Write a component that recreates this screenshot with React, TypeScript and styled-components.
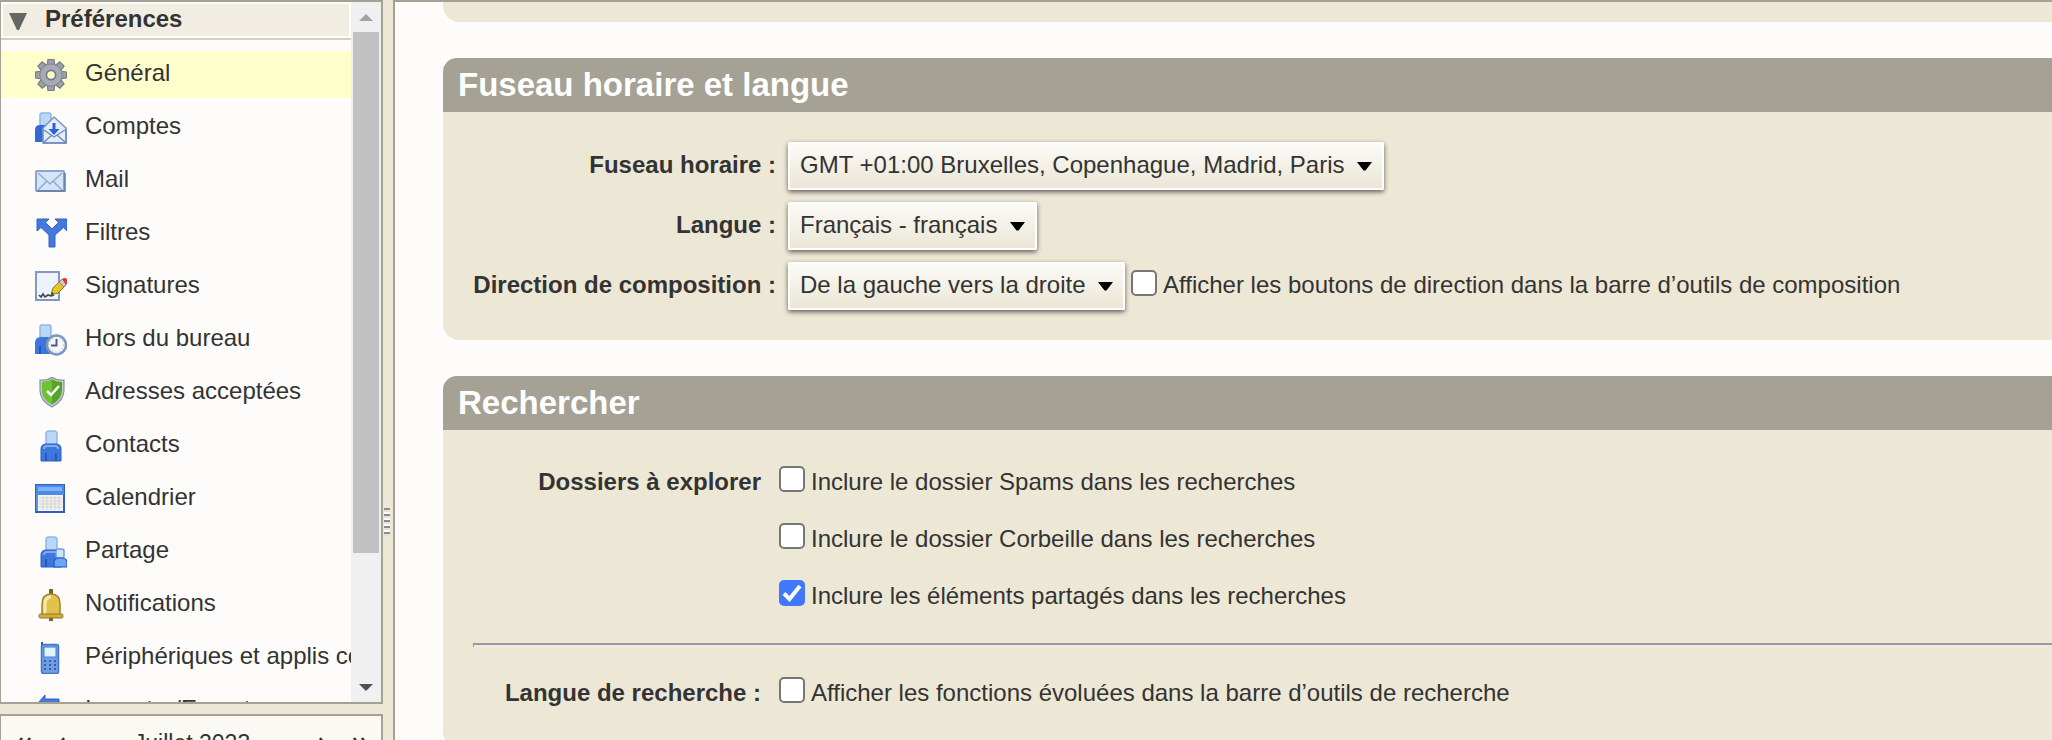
import React, { useId, useState } from "react";
import styled, { createGlobalStyle } from "styled-components";

const GlobalStyle = createGlobalStyle`
  *, *::before, *::after { box-sizing: border-box; }
  body {
    margin: 0;
    background: #ece7d6;
    color: #333;
    font-family: "Liberation Sans", Arial, sans-serif;
    font-size: 24px;
    line-height: 24px;
  }
`;

const LINE = "#a5a194";

const Page = styled.div`
  display: grid;
  grid-template-columns: 383px 10px minmax(0, 1fr);
  height: 100vh;
  overflow: hidden;
`;

const Sidebar = styled.aside`
  display: flex;
  flex-direction: column;
  gap: 10px;
  min-height: 0;
`;

const Panel = styled.section<{ $tint: string }>`
  background: ${(p) => p.$tint};
  border: 2px solid ${LINE};
  border-left-width: 1px;
  overflow: hidden;
`;

const TreePanel = styled(Panel)`
  flex: 1;
  min-height: 0;
  display: grid;
  grid-template-columns: minmax(0, 1fr) 30px;
`;

const Tree = styled.nav`
  overflow: hidden;
`;

const TreeTitle = styled.button`
  display: flex;
  gap: 18px;
  width: 100%;
  height: 36px;
  margin-bottom: 2px;
  padding: 0 0 0 6px;
  border: 2px solid #fff;
  background: #f2ede3;
  box-shadow: 0 2px #d5cfbc;
  color: inherit;
  font: inherit;
  font-weight: bold;
  line-height: 30px;
  text-align: left;

  svg { margin-top: 9px; }
`;

const TreeList = styled.ul`
  display: flex;
  flex-direction: column;
  gap: 6px;
  margin: 0;
  padding: 11px 0 0;
  list-style: none;
`;

const TreeLink = styled.a<{ $active: boolean }>`
  display: flex;
  gap: 18px;
  height: 47px;
  padding: 8px 0 0 34px;
  background: ${(p) => (p.$active ? "#ffffcc" : "transparent")};
  color: inherit;
  line-height: 28px;
  text-decoration: none;
  white-space: nowrap;

  svg { flex: none; }
`;

const ScrollBar = styled.div`
  display: flex;
  flex-direction: column;
  background: #f0f0f0;
`;

const ScrollArrow = styled.button`
  display: grid;
  place-items: center;
  height: 30px;
  padding: 0;
  border: 0;
  background: none;
`;

const ScrollThumb = styled.div`
  flex: 521;
  margin: 0 2px;
  background: #c1c1c1;
`;

const ScrollRest = styled.div`
  flex: 119;
`;

const MiniCalendar = styled(Panel)`
  flex: 0 0 26px;
  border-bottom: 0;
`;

const MonthBar = styled.div`
  display: flex;
  align-items: center;
  height: 54px;
  padding: 0 14px 0 16px;
  font-size: 23px;
`;

const MonthName = styled.span`
  flex: 1;
  text-align: center;
`;

const MonthButton = styled.button<{ $end?: boolean }>`
  display: flex;
  justify-content: ${(p) => (p.$end ? "flex-end" : "flex-start")};
  width: 42px;
  padding: 0;
  border: 0;
  background: none;
`;

const Splitter = styled.div`
  display: grid;
  align-content: start;
  padding: 508px 0 0 1px;
`;

const Grip = styled.span`
  width: 6px;
  height: 28px;
  background: repeating-linear-gradient(#8f8c84 0 2px, #e4e2da 2px 4px, #fff 4px 6px);
`;

const Main = styled.main`
  min-width: 0;
  padding-left: 48px;
  border: solid ${LINE};
  border-width: 2px 0 0 2px;
  background: #fdfcfa;
  overflow: hidden;
`;

const Card = styled.section`
  margin-bottom: 36px;
  border-radius: 14px 0 0 16px;
  background: #ede7d6;
  overflow: hidden;
`;

const CardEnd = styled.div`
  height: 20px;
  margin-bottom: 36px;
  border-radius: 0 0 0 16px;
  background: #ede7d6;
`;

const CardTitle = styled.h2`
  margin: 0;
  padding-left: 15px;
  background: ${LINE};
  color: #fff;
  font-size: 33px;
  line-height: 54px;
`;

const ChoiceForm = styled.div`
  display: grid;
  grid-template-columns: 303px minmax(0, 1fr);
  gap: 12px;
  padding: 30px 0 30px 30px;
  align-items: center;
`;

const Caption = styled.label`
  padding-bottom: 2px;
  font-weight: bold;
  text-align: right;
  white-space: nowrap;
`;

const GroupCaption = styled.span`
  font-weight: bold;
  text-align: right;
  white-space: nowrap;
`;

const Controls = styled.div`
  display: flex;
  align-items: center;
  gap: 6px;

  > label { padding-bottom: 2px; }
`;

const SelectBox = styled.span`
  display: inline-grid;
  align-items: center;
`;

const Select = styled.select`
  grid-area: 1 / 1;
  appearance: none;
  min-width: 249px;
  height: 48px;
  padding: 0 37px 2px 10px;
  border: 2px solid #fff;
  border-radius: 2px;
  background: linear-gradient(#fbfaf6, #ebe6d6);
  box-shadow: 0 2px 5px rgba(0, 0, 0, 0.6);
  color: inherit;
  font: inherit;
  line-height: 32px;
`;

const SelectArrow = styled.svg`
  grid-area: 1 / 1;
  justify-self: end;
  margin-right: 12px;
  pointer-events: none;
`;

const FolderForm = styled.div`
  padding: 23px 0 27px 30px;
`;

const FolderRow = styled.div`
  display: grid;
  grid-template-columns: 288px minmax(0, 1fr);
  column-gap: 18px;
  align-items: center;
  height: 57px;
`;

const Rule = styled.hr`
  height: 4px;
  margin: 19px 0 17px;
  border: solid #9a9a9a;
  border-width: 2px 0 0 1px;
  background: #ebebeb;
`;

const CheckLabel = styled.label`
  display: flex;
  align-items: center;
  gap: 6px;
  white-space: nowrap;
`;

const CheckCell = styled.span`
  display: grid;
  margin-bottom: 5px;
`;

const CheckBox = styled.input`
  grid-area: 1 / 1;
  appearance: none;
  width: 26px;
  height: 26px;
  margin: 0;
  border: 2px solid #767676;
  border-radius: 5px;
  background: #fff;

  &:checked {
    border-color: #3f78ff;
    background: #3f78ff;
  }
`;

const CheckMark = styled.svg`
  grid-area: 1 / 1;
  pointer-events: none;
`;

function Person() {
  return (
    <>
      <rect x="11" y="1" width="11" height="14" rx="3" fill="#b9d8f7" stroke="#8fb5e8" strokeWidth="1.5" />
      <path d="M6 31V19q0-5 5-5h10q5 0 5 5v12z" fill="#3d76dc" stroke="#2c5fc6" strokeWidth="1" />
      <path d="M9 19q0-3 3-3h8q3 0 3 3" fill="none" stroke="#7facf3" strokeWidth="2" />
      <path d="M11 23v8M21 23v8" stroke="#214fb4" strokeWidth="1.5" />
    </>
  );
}

const teeth = [0, 45, 90, 135, 180, 225, 270, 315];

const icons: Record<string, React.ReactNode> = {
  gear: (
    <>
      {teeth.map((a) => (
        <path key={a} d="M12 8l1-7.500h6l1 7.500z" transform={`rotate(${a} 16 16)`} fill="#9da1aa" stroke="#767b86" strokeWidth="1.2" />
      ))}
      <circle cx="16" cy="16" r="8" fill="none" stroke="#858a95" strokeWidth="7.500" />
      <circle cx="16" cy="16" r="8" fill="none" stroke="#a7abb4" strokeWidth="5" />
      <circle cx="16" cy="16" r="4.500" fill="#ffffcc" stroke="#747984" strokeWidth="1.5" />
    </>
  ),
  accounts: (
    <>
      <rect x="5" y="1" width="11" height="13" rx="2" fill="#b9d8f7" stroke="#8fb5e8" strokeWidth="1.5" />
      <path d="M0 30V18q0-5 5-5h8v17z" fill="#3469d3" />
      <path d="M8 16L19 5l12 11v15H8z" fill="#e3ecf8" stroke="#7c97c2" strokeWidth="1.6" />
      <path d="M9 18l10 7 11-7M9 30l8-7M30 30l-8-7M8 31h23V17" fill="none" stroke="#6f8bb8" strokeWidth="1.4" />
      <path d="M17.500 11h3v6h4l-5.500 6-5.500-6h4z" fill="#2f62cf" />
    </>
  ),
  mail: (
    <>
      <rect x="1" y="6" width="28" height="20" rx="1" fill="#d6e4f7" stroke="#8aa4cb" strokeWidth="2" />
      <path d="M3 8l12 11L27 8M3 25l9-9M27 25l-9-9" fill="none" stroke="#93acd2" strokeWidth="1.6" />
      <path d="M2 26h28V8" fill="none" stroke="#617ba3" strokeWidth="1.5" />
    </>
  ),
  filters: (
    <path
      d="M2 1h12l-3.500 3.500L17 11l6.500-6.500L20 1h12v12l-3.500-3.500L20 17v12h-6V17L6 9.500 2 13z"
      fill="#4478dd"
      stroke="#3162c8"
      strokeWidth="1"
    />
  ),
  signatures: (
    <>
      <rect x="1" y="1" width="23" height="28" fill="#edf3fb" stroke="#8299bd" strokeWidth="2" />
      <path d="M4 24l2 2 2-3 2 3 3-2 3 1 3-1" fill="none" stroke="#444" strokeWidth="1.6" />
      <path d="M16 24l2-7 8-8 5 5-8 8z" fill="#e7c62c" stroke="#8c7a23" strokeWidth="1" />
      <path d="M24 11l3-3 5 4-3 4z" fill="#ccc" stroke="#777" strokeWidth=".8" />
      <path d="M27 8q3-2 5 0v4l-1 2z" fill="#e2373a" />
      <path d="M16 24l1-3 2 2z" fill="#333" />
    </>
  ),
  away: (
    <>
      <rect x="5" y="1" width="11" height="14" rx="2" fill="#b9d8f7" stroke="#8fb5e8" strokeWidth="1.5" />
      <path d="M0 30V19q0-6 6-6h10q5 0 5 5v12z" fill="#3d76dc" />
      <path d="M5 22v8" stroke="#214fb4" strokeWidth="1.5" />
      <circle cx="21.500" cy="21" r="9.500" fill="#f4f7fb" stroke="#7f96b8" strokeWidth="2.500" />
      <circle cx="21.500" cy="21" r="7" fill="none" stroke="#c0cbdc" strokeWidth="1.500" strokeDasharray="1 2.600" />
      <path d="M21.500 15v6.500H16" fill="none" stroke="#4d5f7e" strokeWidth="2" />
    </>
  ),
  shield: (
    <>
      <path d="M17 0q5 4 12 3v10q0 11-12 17Q5 24 5 13V3q7 1 12-3z" fill="#c1cad5" stroke="#8695a7" strokeWidth="1.2" />
      <path d="M17 2q4 3 10 3v8q0 9-10 14.500Q7 22 7 13V5q6 0 10-3z" fill="#55a524" />
      <path d="M17 2v25.500Q7 22 7 13V5q6 0 10-3z" fill="#6fc233" />
      <path d="M12 14l4 4 8-9" fill="none" stroke="#fff" strokeWidth="2.500" />
    </>
  ),
  contact: <Person />,
  calendar: (
    <>
      <rect x="1" y="2" width="28" height="27" fill="#f3f3f3" stroke="#2e60bd" strokeWidth="2" />
      <path d="M1 2h28v10H1z" fill="#4d8ae8" />
      <path d="M3 4h24v4H3z" fill="#7fb2f7" />
      <path d="M2 12v16" stroke="#5c92e6" strokeWidth="2" />
      <path d="M4 15h23M4 18h23M4 21h23M4 24h23M8 13v14M12 13v14M16 13v14M20 13v14M24 13v14" stroke="#d4d4d4" strokeWidth="1" />
    </>
  ),
  share: (
    <>
      <Person />
      <rect x="21" y="13" width="8" height="9" rx="2" fill="#cfe3fb" stroke="#6f9ce6" strokeWidth="1.5" />
      <path d="M19 31v-4q0-5 5-5h3q5 0 5 5v4z" fill="#6fa3f3" stroke="#2455c0" strokeWidth="1.2" />
    </>
  ),
  bell: (
    <>
      <path d="M16 0v5M16 29v3" stroke="#7c6028" strokeWidth="4" />
      <path d="M7 26V15q0-10 9-10t9 10v11z" fill="#e2c24a" stroke="#a2822f" strokeWidth="1.500" />
      <path d="M10 25V15q0-7 6-7" fill="none" stroke="#f7e9a6" strokeWidth="3" />
      <path d="M5 25h22q1 0 1 2t-1 2H5q-1 0-1-2t1-2z" fill="#d3ae37" stroke="#94752a" strokeWidth="1" />
    </>
  ),
  phone: (
    <>
      <path d="M7 0v6" stroke="#555" strokeWidth="2" />
      <rect x="6.500" y="2.500" width="17" height="29" rx="2" fill="#6e9ee6" stroke="#4574c4" strokeWidth="1.5" />
      <rect x="9" y="5" width="12" height="10" fill="#dff3fb" stroke="#4b7ccd" strokeWidth="1" />
      <path d="M9 19h12M9 23h12M9 27h12" stroke="#365fa6" strokeWidth="2" strokeDasharray="2 3" />
    </>
  ),
  transfer: (
    <>
      <path d="M3 8l7-8v4h14v8H10v4z" fill="#4478dd" stroke="#3162c8" strokeWidth="1" />
      <path d="M29 23l-7-8v5H8v7h14v4z" fill="#6fa3f3" stroke="#3162c8" strokeWidth="1" />
    </>
  ),
};

const entries: [string, string][] = [
  ["gear", "Général"],
  ["accounts", "Comptes"],
  ["mail", "Mail"],
  ["filters", "Filtres"],
  ["signatures", "Signatures"],
  ["away", "Hors du bureau"],
  ["shield", "Adresses acceptées"],
  ["contact", "Contacts"],
  ["calendar", "Calendrier"],
  ["share", "Partage"],
  ["bell", "Notifications"],
  ["phone", "Périphériques et applis connectés"],
  ["transfer", "Importer/Exporter"],
];

function Chevrons({ double = false, right = false }: { double?: boolean; right?: boolean }) {
  return (
    <svg width={double ? 14 : 6} height="12" viewBox={`0 0 ${double ? 14 : 6} 12`} aria-hidden="true">
      <g transform={right ? `rotate(180 ${double ? 7 : 3} 6)` : undefined} fill="none" stroke="#333" strokeWidth="2.500">
        <path d="M5 1L1.500 6 5 11" />
        {double && <path d="M13 1L9.500 6l3.500 5" />}
      </g>
    </svg>
  );
}

function ChoiceRow({ caption, value, children }: { caption: string; value: string; children?: React.ReactNode }) {
  const id = useId();
  return (
    <>
      <Caption htmlFor={id}>{caption}</Caption>
      <Controls>
        <SelectBox>
          <Select id={id} defaultValue={value}>
            <option>{value}</option>
          </Select>
          <SelectArrow width="15" height="9" viewBox="0 0 15 9" aria-hidden="true">
            <path d="M0 0h15L8.500 8.500h-2z" fill="#000" />
          </SelectArrow>
        </SelectBox>
        {children}
      </Controls>
    </>
  );
}

function Check({ label, initial = false }: { label: string; initial?: boolean }) {
  const [on, setOn] = useState(initial);
  return (
    <CheckLabel>
      <CheckCell>
        <CheckBox type="checkbox" checked={on} onChange={(e) => setOn(e.target.checked)} />
        {on && (
          <CheckMark width="26" height="26" viewBox="0 0 26 26" aria-hidden="true">
            <path d="M5 13.500l5.500 5.500L21 6" fill="none" stroke="#fff" strokeWidth="4" />
          </CheckMark>
        )}
      </CheckCell>
      {label}
    </CheckLabel>
  );
}

export default function App() {
  return (
    <>
      <GlobalStyle />
      <Page>
        <Sidebar>
          <TreePanel $tint="#fdfcfa">
            <Tree aria-label="Préférences">
              <TreeTitle type="button" aria-expanded="true">
                <svg width="18" height="18" viewBox="0 0 18 18" aria-hidden="true">
                  <path d="M0 0h18L10 17H8z" fill="#666" />
                </svg>
                Préférences
              </TreeTitle>
              <TreeList>
                {entries.map(([icon, name], i) => (
                  <li key={name}>
                    <TreeLink href="#" $active={i === 0} aria-current={i === 0 ? "page" : undefined}>
                      <svg width="32" height="32" viewBox="0 0 32 32" aria-hidden="true">
                        {icons[icon]}
                      </svg>
                      {name}
                    </TreeLink>
                  </li>
                ))}
              </TreeList>
            </Tree>
            <ScrollBar>
              <ScrollArrow type="button" aria-label="Monter">
                <svg width="14" height="7" viewBox="0 0 14 7" aria-hidden="true">
                  <path d="M0 7l7-7 7 7z" fill="#a3a3a3" />
                </svg>
              </ScrollArrow>
              <ScrollThumb />
              <ScrollRest />
              <ScrollArrow type="button" aria-label="Descendre">
                <svg width="14" height="7" viewBox="0 0 14 7" aria-hidden="true">
                  <path d="M0 0l7 7 7-7z" fill="#505050" />
                </svg>
              </ScrollArrow>
            </ScrollBar>
          </TreePanel>
          <MiniCalendar $tint="#faf9f3">
            <MonthBar>
              <MonthButton type="button" aria-label="Année précédente"><Chevrons double /></MonthButton>
              <MonthButton type="button" aria-label="Mois précédent"><Chevrons /></MonthButton>
              <MonthName>Juillet 2023</MonthName>
              <MonthButton type="button" aria-label="Mois suivant" $end><Chevrons right /></MonthButton>
              <MonthButton type="button" aria-label="Année suivante" $end><Chevrons double right /></MonthButton>
            </MonthBar>
          </MiniCalendar>
        </Sidebar>
        <Splitter>
          <Grip />
        </Splitter>
        <Main>
          <CardEnd />
          <Card>
            <CardTitle>Fuseau horaire et langue</CardTitle>
            <ChoiceForm>
              <ChoiceRow caption="Fuseau horaire :" value="GMT +01:00 Bruxelles, Copenhague, Madrid, Paris" />
              <ChoiceRow caption="Langue :" value="Français - français" />
              <ChoiceRow caption="Direction de composition :" value="De la gauche vers la droite">
                <Check label="Afficher les boutons de direction dans la barre d’outils de composition" />
              </ChoiceRow>
            </ChoiceForm>
          </Card>
          <Card>
            <CardTitle>Rechercher</CardTitle>
            <FolderForm>
              <FolderRow>
                <GroupCaption>Dossiers à explorer</GroupCaption>
                <Check label="Inclure le dossier Spams dans les recherches" />
              </FolderRow>
              <FolderRow>
                <span />
                <Check label="Inclure le dossier Corbeille dans les recherches" />
              </FolderRow>
              <FolderRow>
                <span />
                <Check label="Inclure les éléments partagés dans les recherches" initial />
              </FolderRow>
              <Rule />
              <FolderRow>
                <GroupCaption>Langue de recherche :</GroupCaption>
                <Check label="Afficher les fonctions évoluées dans la barre d’outils de recherche" />
              </FolderRow>
            </FolderForm>
          </Card>
        </Main>
      </Page>
    </>
  );
}
